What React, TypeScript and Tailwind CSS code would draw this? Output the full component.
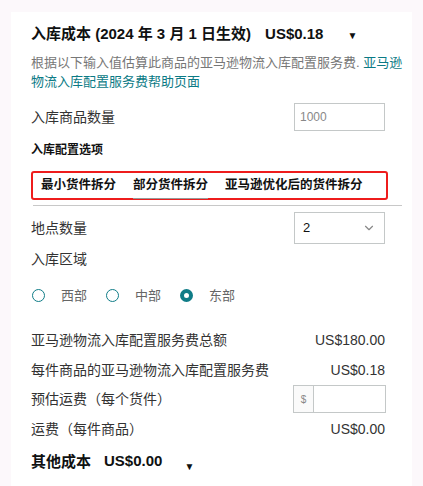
import { ChevronDown } from "lucide-react";

const font = { fontFamily: '"Liberation Sans", "Noto Sans CJK SC", sans-serif' };

function Radio({ label, checked }: { label: string; checked?: boolean }) {
  return (
    <label className="flex items-center gap-[16px]">
      {checked ? (
        <span className="w-[13px] h-[13px] rounded-full border-[4px] border-[#0f7c87] bg-white" />
      ) : (
        <span className="w-[13px] h-[13px] rounded-full border-[1.5px] border-[#0f7c87] bg-white" />
      )}
      <span className="text-[13px] text-[#666]">{label}</span>
    </label>
  );
}

export default function App() {
  return (
    <div className="min-h-[486px] bg-[#fcf8fb] pt-[12px] px-[11px]" style={font}>
      <div className="bg-white pl-[20px] pr-[27px] pt-[10px] pb-[6px] min-h-[474px]">
        <div className="flex items-center h-[24px] text-[15px] font-bold text-[#0f1111]">
          <span>入库成本 (2024 年 3 月 1 日生效)</span>
          <span className="ml-[14px]">US$0.18</span>
          <span className="ml-[24px] text-[10px] mt-[3px]">▼</span>
        </div>
        <p className="mt-[7px] mr-[-20px] text-[13px] leading-[19px] text-[#777]">
          根据以下输入值估算此商品的亚马逊物流入库配置服务费.{" "}
          <span className="text-[#0b7a85]">亚马逊物流入库配置服务费帮助页面</span>
        </p>

        <div className="mt-[12px] flex items-center justify-between">
          <span className="text-[14px] text-[#333]">入库商品数量</span>
          <div className="w-[91px] h-[28px] border border-[#c4c8c8] flex items-center px-[5px] text-[12px] text-[#888]">
            1000
          </div>
        </div>

        <div className="mt-[10px] text-[12px] font-bold text-[#111]">入库配置选项</div>

        <div className="mt-[12px]">
          <div className="mr-[-3px] h-[29px] border-2 border-[#ee1c1c] rounded-[3px] flex items-center gap-[17px] pl-[8px] text-[12.5px] font-bold text-[#111]">
            <span>最小货件拆分</span>
            <span className="relative">
              部分货件拆分
              <span className="absolute left-0 right-0 bottom-[-4px] h-px bg-[#999]" />
            </span>
            <span>亚马逊优化后的货件拆分</span>
          </div>
          <div className="mt-[5px] ml-[2px] mr-[-17px] h-px bg-[#c8c8c8]" />
        </div>

        <div className="mt-[6px] flex items-center justify-between">
          <span className="text-[14px] text-[#333]">地点数量</span>
          <div className="w-[91px] h-[32px] border border-[#c4c8c8] flex items-center justify-between pl-[8px] pr-[8px] text-[13px] text-[#111]">
            <span>2</span>
            <ChevronDown size={14} className="text-[#888]" strokeWidth={2} />
          </div>
        </div>

        <div className="mt-[5px] text-[14px] text-[#333]">入库区域</div>

        <div className="mt-[16px] ml-[1px] flex items-center gap-[19px]">
          <Radio label="西部" />
          <Radio label="中部" />
          <Radio label="东部" checked />
        </div>

        <div className="mt-[19px] text-[14px] text-[#333]">
          <div className="flex items-center justify-between h-[31px]">
            <span>亚马逊物流入库配置服务费总额</span>
            <span>US$180.00</span>
          </div>
          <div className="flex items-center justify-between h-[29px]">
            <span>每件商品的亚马逊物流入库配置服务费</span>
            <span>US$0.18</span>
          </div>
          <div className="flex items-center justify-between h-[29px]">
            <span>预估运费（每个货件）</span>
            <div className="w-[93px] h-[28px] border border-[#c4c8c8] flex items-stretch mr-[-1px]">
              <span className="w-[20px] border-r border-[#c4c8c8] bg-[#fafafa] flex items-center justify-center text-[10px] text-[#888]">
                $
              </span>
              <span className="flex-1" />
            </div>
          </div>
          <div className="flex items-center justify-between h-[31px]">
            <span>运费（每件商品）</span>
            <span>US$0.00</span>
          </div>
        </div>

        <div className="mt-[6px] flex items-center h-[24px] text-[15px] font-bold text-[#0f1111]">
          <span>其他成本</span>
          <span className="ml-[13px] mt-[-3px]">US$0.00</span>
          <span className="ml-[22px] text-[10px] mt-[8px]">▼</span>
        </div>
      </div>
    </div>
  );
}
